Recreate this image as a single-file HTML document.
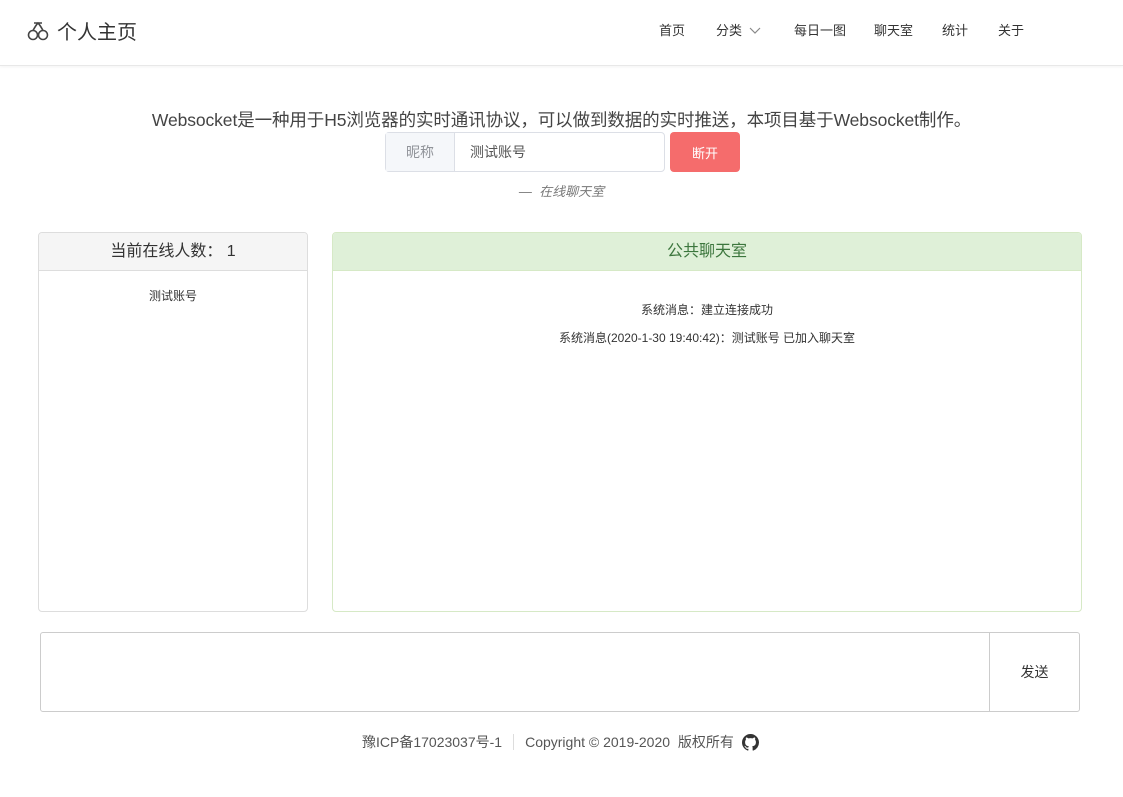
<!DOCTYPE html>
<html><head><meta charset="utf-8"><style>
*{box-sizing:border-box;margin:0;padding:0}
body{width:1123px;height:797px;background:#fff;font-family:"Liberation Sans","Noto Sans CJK SC",sans-serif;color:#333;position:relative;overflow:hidden}
.hdr{position:absolute;left:0;top:0;width:1123px;height:66px;border-bottom:1px solid #e8e8e8;box-shadow:0 1px 3px rgba(0,0,0,.05)}
.logo{position:absolute;left:27px;top:16px;font-size:20px;color:#333;display:flex;align-items:center}
.nav a{position:absolute;top:20px;font-size:13px;color:#333;text-decoration:none}
.abs{position:absolute}
</style></head><body>
<div class="hdr">
<div class="logo"><svg width="22" height="22" viewBox="0 0 22 22" fill="none" stroke="#444" stroke-width="1.6"><circle cx="6" cy="15" r="4.5"/><circle cx="16" cy="15" r="4.5"/><path d="M6 10.5 Q9 5 11 3 Q13 5 16 10.5 M7 3h8"/></svg><span style="margin-left:8px">个人主页</span></div>
<div class="nav">
<a style="left:659px">首页</a>
<a style="left:716px">分类 <svg width="12" height="8" viewBox="0 0 12 8" style="margin-left:3px"><path d="M1 1l5 5 5-5" stroke="#888" fill="none" stroke-width="1.2"/></svg></a>
<a style="left:794px">每日一图</a>
<a style="left:874px">聊天室</a>
<a style="left:942px">统计</a>
<a style="left:998px">关于</a>
</div></div>
<div class="abs" style="left:0;width:1123px;top:107px;text-align:center;font-size:17.5px;letter-spacing:-0.1px;color:#444">Websocket是一种用于H5浏览器的实时通讯协议，可以做到数据的实时推送，本项目基于Websocket制作。</div>
<div class="abs" style="left:385px;top:132px;width:280px;height:40px;border:1px solid #dcdfe6;border-radius:4px;display:flex;font-size:14px;background:#fff">
<div style="width:69px;background:#f5f7fa;border-right:1px solid #dcdfe6;color:#909399;display:flex;align-items:center;justify-content:center">昵称</div>
<div style="padding-left:15px;display:flex;align-items:center;color:#555">测试账号</div></div>
<div class="abs" style="left:670px;top:132px;width:70px;height:40px;background:#f56c6c;border-radius:4px;color:#fff;font-size:13px;display:flex;align-items:center;justify-content:center">断开</div>
<div class="abs" style="left:0;width:1123px;top:181px;text-align:center;font-size:13px;color:#777;font-style:italic">—&nbsp; 在线聊天室</div>
<div class="abs" style="left:38px;top:232px;width:270px;height:380px;border:1px solid #ddd;border-radius:4px;overflow:hidden">
<div style="height:38px;background:#f5f5f5;border-bottom:1px solid #ddd;text-align:center;line-height:38px;font-size:16px">当前在线人数： 1</div>
<div style="text-align:center;font-size:12px;margin-top:16px">测试账号</div></div>
<div class="abs" style="left:332px;top:232px;width:750px;height:380px;border:1px solid #d6e9c6;border-radius:4px;overflow:hidden">
<div style="height:38px;background:#dff0d8;border-bottom:1px solid #d6e9c6;text-align:center;line-height:38px;font-size:16px;color:#3c763d">公共聊天室</div>
<div style="text-align:center;font-size:12px;margin-top:30px">系统消息：建立连接成功</div>
<div style="text-align:center;font-size:12px;margin-top:11px">系统消息(2020-1-30 19:40:42)：测试账号 已加入聊天室</div></div>
<div class="abs" style="left:40px;top:632px;width:1040px;height:80px;border:1px solid #ccc;border-radius:3px">
<div style="position:absolute;right:0;top:0;width:90px;height:78px;border-left:1px solid #ccc;display:flex;align-items:center;justify-content:center;font-size:14px">发送</div></div>
<div class="abs" style="left:362px;top:732px;font-size:14px;color:#555;display:flex;align-items:center">豫ICP备17023037号-1<span style="display:inline-block;width:1px;height:16px;background:#ddd;margin:0 11px"></span>Copyright © 2019-2020&nbsp; 版权所有 <svg width="17" height="17" viewBox="0 0 16 16" style="margin-left:8px"><path fill="#333" d="M8 0C3.58 0 0 3.580 0 8c0 3.54 2.29 6.53 5.47 7.59.4.07.55-.17.55-.38v-1.330c-2.230.48-2.700-1.070-2.700-1.070-.36-.92-.89-1.170-.89-1.170-.73-.5.06-.49.06-.49.8.06 1.230.83 1.230.83.72 1.220 1.870.87 2.330.66.07-.52.28-.87.51-1.070-1.780-.2-3.650-.89-3.650-3.950 0-.87.31-1.590.82-2.150-.08-.2-.36-1.020.08-2.120 0 0 .67-.21 2.200.82A7.7 7.7 0 0 1 8 3.870c.68 0 1.360.09 2 .27 1.530-1.040 2.200-.82 2.200-.82.44 1.100.16 1.920.08 2.120.51.56.82 1.270.82 2.150 0 3.070-1.870 3.750-3.650 3.950.29.25.54.73.54 1.480v2.190c0 .21.15.46.55.38A8 8 0 0 0 16 8c0-4.420-3.580-8-8-8z"/></svg></div>
</body></html>
